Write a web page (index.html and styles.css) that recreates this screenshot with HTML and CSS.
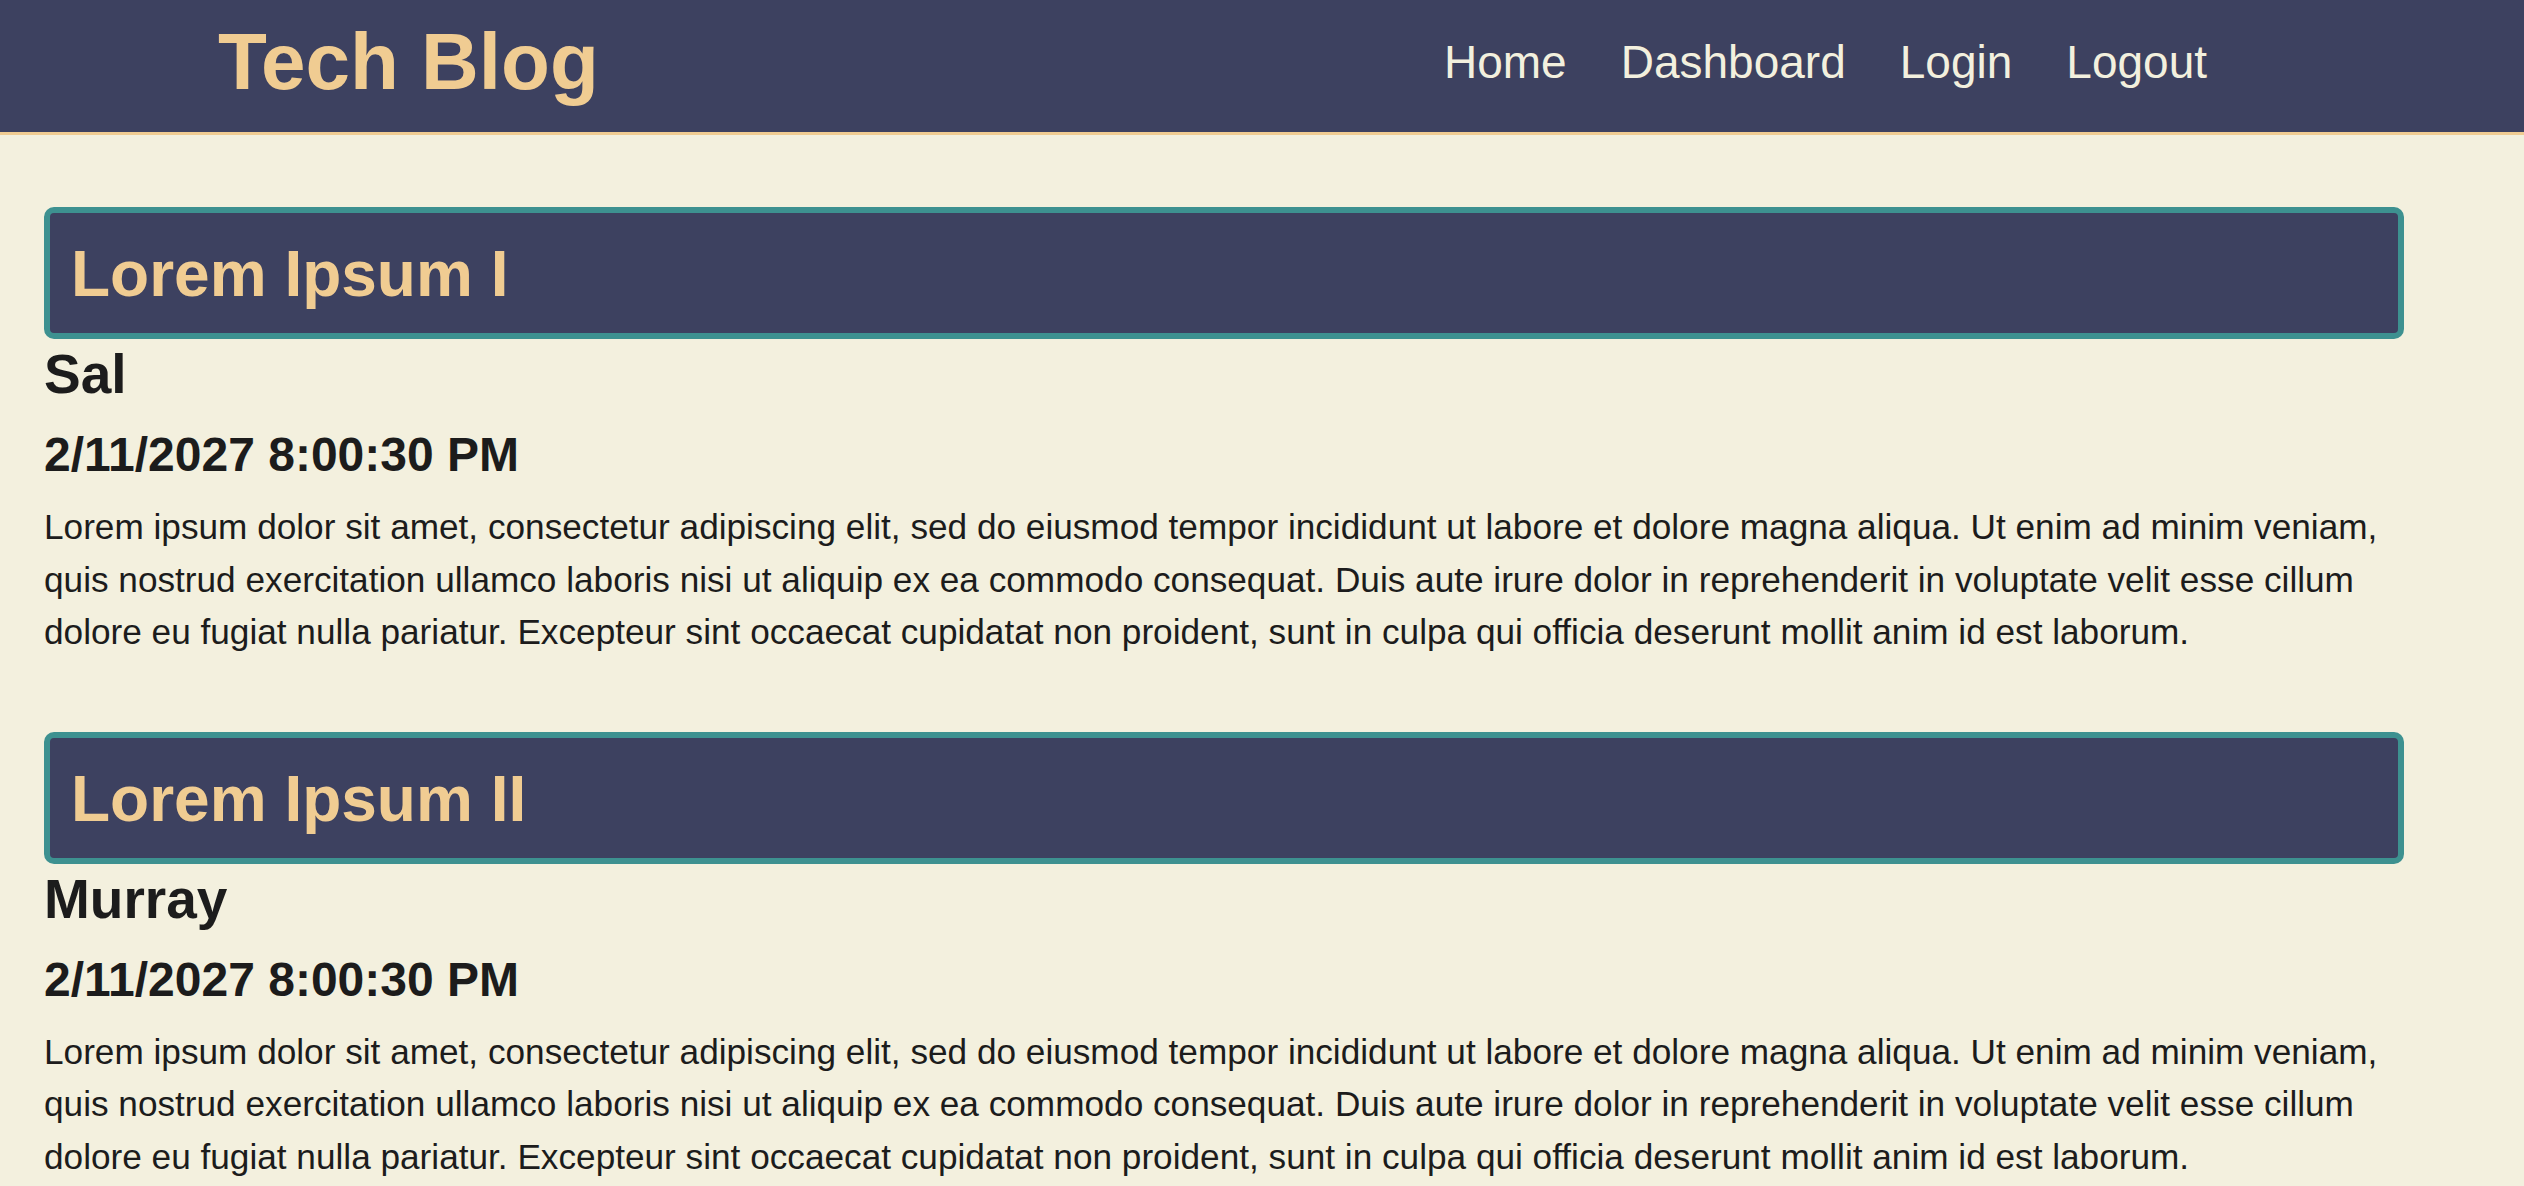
FILE: index.html
```html
<!DOCTYPE html>
<html lang="en">
<head>
<meta charset="utf-8">
<title>Tech Blog</title>
<link rel="stylesheet" href="styles.css">
</head>
<body>
<header class="site-header">
  <h1 class="brand">Tech Blog</h1>
  <nav class="nav">
    <a class="nav-link" href="#">Home</a>
    <a class="nav-link" href="#">Dashboard</a>
    <a class="nav-link" href="#">Login</a>
    <a class="nav-link" href="#">Logout</a>
  </nav>
</header>
<main class="posts">
  <article class="post">
    <h2 class="post-title">Lorem Ipsum I</h2>
    <h3 class="post-author">Sal</h3>
    <h4 class="post-date">2/11/2027 8:00:30 PM</h4>
    <p class="post-body">Lorem ipsum dolor sit amet, consectetur adipiscing elit, sed do eiusmod tempor incididunt ut labore et dolore magna aliqua. Ut enim ad minim veniam, quis nostrud exercitation ullamco laboris nisi ut aliquip ex ea commodo consequat. Duis aute irure dolor in reprehenderit in voluptate velit esse cillum dolore eu fugiat nulla pariatur. Excepteur sint occaecat cupidatat non proident, sunt in culpa qui officia deserunt mollit anim id est laborum.</p>
  </article>
  <article class="post">
    <h2 class="post-title">Lorem Ipsum II</h2>
    <h3 class="post-author">Murray</h3>
    <h4 class="post-date">2/11/2027 8:00:30 PM</h4>
    <p class="post-body">Lorem ipsum dolor sit amet, consectetur adipiscing elit, sed do eiusmod tempor incididunt ut labore et dolore magna aliqua. Ut enim ad minim veniam, quis nostrud exercitation ullamco laboris nisi ut aliquip ex ea commodo consequat. Duis aute irure dolor in reprehenderit in voluptate velit esse cillum dolore eu fugiat nulla pariatur. Excepteur sint occaecat cupidatat non proident, sunt in culpa qui officia deserunt mollit anim id est laborum.</p>
  </article>
</main>
</body>
</html>
```

FILE: styles.css
```css
html, body {
  margin: 0;
  padding: 0;
}

body {
  background: #f3f0de;
  color: #1c1c1c;
  font-family: "Liberation Sans", Arial, Helvetica, sans-serif;
}

.site-header {
  box-sizing: border-box;
  height: 135px;
  background: #3d4160;
  border-bottom: 3px solid #f0cc92;
  display: flex;
  align-items: center;
  justify-content: space-between;
  padding: 0 317px 8px 218px;
}

.brand {
  margin: 0;
  font-size: 80px;
  line-height: 92px;
  font-weight: 700;
  color: #f0cc92;
}

.nav {
  display: flex;
  gap: 54px;
}

.nav-link {
  font-size: 46px;
  line-height: 54px;
  color: #f3f0de;
  text-decoration: none;
}

.posts {
  padding: 72px 120px 0 44px;
}

.post {
  margin-bottom: 73px;
}

.post-title {
  margin: 0;
  background: #3d4160;
  border: 6px solid #3d9190;
  border-radius: 10px;
  padding: 25px 18px 23px 21px;
  font-size: 64px;
  line-height: 72px;
  font-weight: 700;
  color: #f0cc92;
}

.post-author {
  margin: 5px 0 0;
  font-size: 55px;
  line-height: 60px;
  font-weight: 700;
}

.post-date {
  margin: 23px 0 0;
  font-size: 48px;
  line-height: 56px;
  font-weight: 700;
}

.post-body {
  margin: 18px 0 0;
  font-size: 35.2px;
  line-height: 52.5px;
}
```
